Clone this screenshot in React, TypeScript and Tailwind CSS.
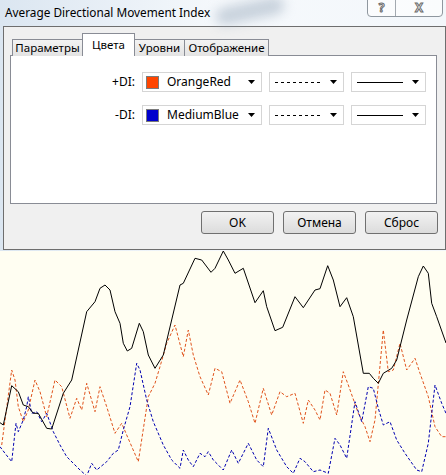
import React from "react";

// точки графика (x, y в координатах страницы)
const blackLine = [
  0, 422.7, 3.3, 425, 11.7, 385.7, 18.3, 391.7, 23.3, 405, 28.3, 406.7, 33.3, 413.3, 38.3, 413.3, 46.7, 428.3, 51.7, 429,
  63.3, 393.3, 71.7, 380, 86.7, 311.7, 95, 301.7, 100, 288.3, 105, 285, 110, 290, 115, 311.7, 120, 323.3, 123.3, 343.3,
  127.3, 351, 131.7, 348.3, 139.3, 323.3, 143.3, 331.7, 148.3, 355, 155, 368.3, 163.3, 355, 180, 285, 183.3, 283.3,
  195, 258.3, 201.7, 260, 211, 272.3, 215, 268.3, 223.3, 251, 228.3, 260, 235, 273.3, 243.3, 268.3, 255, 302.7,
  263.3, 290.7, 266.7, 306.7, 275, 330.7, 282.7, 327.3, 295, 296.7, 303.3, 307.7, 315, 290, 320, 288.7, 327.7, 265.7,
  333.3, 280, 340, 306.7, 346.7, 297.7, 353.3, 316.7, 363.3, 373.3, 369.3, 373.3, 373.3, 378.3, 378.3, 383.3,
  383.3, 373.3, 391.7, 368.3, 396.7, 360, 406.7, 320, 418.3, 276.7, 423.3, 266, 428.3, 273.3, 431.7, 303.3,
  436.7, 316.7, 446, 343,
];

const orangeLine = [
  1.7, 445, 11.7, 370, 15, 380, 18.3, 406.7, 23.3, 421.7, 28.3, 410, 35, 380, 40, 391.7, 46.7, 416.7, 55, 380,
  61.7, 386.7, 70, 418.3, 76.7, 398.3, 81.7, 410, 86.7, 383.3, 95, 411.7, 100, 386.7, 106.7, 406.7, 115, 433.3,
  121.7, 423.3, 126.7, 435, 138.3, 461.7, 148.3, 396.7, 155, 383.3, 160, 366.7, 166.7, 343.3, 175, 325, 183.3, 356.7,
  188.3, 330, 193.3, 355, 200, 376.7, 208.3, 395, 215, 368.3, 221.7, 371.7, 230, 403.3, 240, 380, 248.3, 401.7,
  255, 423.3, 263.3, 388.3, 271.7, 415, 280, 391.7, 286.7, 396.7, 295, 393.3, 303.3, 423.3, 308.3, 400, 315, 410,
  320, 420, 325, 390, 330, 393.3, 336.7, 415, 343.3, 371.7, 348.3, 385, 358.3, 413.3, 365, 426.7, 370, 441.7,
  375, 420, 383.3, 330, 388.3, 371.7, 393.3, 370, 400, 343.3, 406.7, 370, 415, 358.3, 420, 373.3, 428.3, 396.7,
  435, 426.7, 441.7, 436.7, 446, 436.7,
];

const blueLine = [
  0, 446.7, 5, 453.3, 11.7, 461.7, 16, 423.3, 18.3, 431.7, 23.3, 420, 26.7, 406.7, 28.3, 396.7, 31.7, 413.3,
  36.7, 411.7, 41.7, 421.7, 46.7, 413.3, 53.3, 431.7, 60, 445, 66.7, 456.7, 80, 470, 86.7, 476, 91.7, 463.3,
  96.7, 470, 106.7, 461.7, 113.3, 453.3, 118.3, 450, 123.3, 430, 130, 406.7, 136.7, 363.3, 140, 370, 146.7, 400,
  153.3, 421.7, 163.3, 445, 171.7, 460, 180, 468.3, 183.3, 450, 188.3, 460, 193.3, 466.7, 200, 453.3, 205, 456.7,
  208.3, 451.7, 213.3, 460, 223.3, 470, 231.7, 450, 238.3, 463.3, 248.3, 443.3, 256.7, 460, 263.3, 466.7,
  268.3, 428.3, 276.7, 450, 286.7, 466.7, 293.3, 473.3, 300, 458.3, 305, 461.7, 313.3, 471.7, 320, 470,
  328.3, 473.3, 335, 438.3, 340, 445, 346.7, 458.3, 355, 401.7, 361.7, 421.7, 368.3, 386.7, 373.3, 388.3,
  378.3, 408.3, 383.3, 425, 390, 421.7, 396.7, 440, 405, 453.3, 416.7, 470, 421.7, 471.7, 428.3, 443.3,
  435, 385, 441.7, 403.3, 446, 413.3,
];

const toPoints = (arr: number[]) => {
  const out: string[] = [];
  for (let i = 0; i < arr.length; i += 2) out.push(`${arr[i]},${arr[i + 1]}`);
  return out.join(" ");
};

function Arrow() {
  return (
    <svg width="7" height="4" viewBox="0 0 7 4" className="shrink-0">
      <path d="M0 0H7L3.5 4Z" fill="#000" />
    </svg>
  );
}

function ColorCombo({ color, name }: { color: string; name: string }) {
  return (
    <div className="w-[120px] h-[20px] border border-[#d5d5d5] bg-white flex items-center pl-[3px] pr-[6px]">
      <div className="w-[13px] h-[13px] border border-[#7a7a7a]" style={{ backgroundColor: color }} />
      <span className="ml-[8px] flex-1 leading-none">{name}</span>
      <Arrow />
    </div>
  );
}

function StyleCombo({ dashed }: { dashed: boolean }) {
  return (
    <div className="w-[75px] h-[20px] border border-[#d5d5d5] bg-white flex items-center pl-[5px] pr-[6px]">
      <svg width="46" height="1" className="shrink-0">
        <line x1="0" y1="0.5" x2="46" y2="0.5" stroke="#000" strokeWidth="1" strokeDasharray={dashed ? "3 3" : undefined} />
      </svg>
      <div className="flex-1" />
      <Arrow />
    </div>
  );
}

function Row({ label, color, name }: { label: string; color: string; name: string }) {
  return (
    <div className="flex items-center h-[20px]">
      <div className="w-[124px] text-right">{label}</div>
      <div className="ml-[7px] flex gap-[7px]">
        <ColorCombo color={color} name={name} />
        <StyleCombo dashed />
        <StyleCombo dashed={false} />
      </div>
    </div>
  );
}

function Button({ children }: { children: React.ReactNode }) {
  return (
    <button className="w-[73px] h-[23px] rounded-[3px] border border-[#707070] bg-gradient-to-b from-[#f2f2f2] to-[#dcdcdc] leading-none text-black">
      {children}
    </button>
  );
}

export default function App() {
  return (
    <div className="w-[446px] h-[475px] overflow-hidden flex flex-col bg-[#fffef2] font-['Noto_Sans',sans-serif] text-[12px] text-black">
      {/* окно диалога */}
      <div className="relative h-[251px] shrink-0 bg-gradient-to-r from-[#dbe6f1] via-[#f6f9fc] to-[#f3f7fb]">
        <div className="absolute left-[215px] top-[2px] w-[70px] h-[18px] rounded-full bg-[#9aabbd] opacity-50 blur-[6px] rotate-[-12deg]" />
        <div className="relative h-[26px] flex items-center pl-[5px] text-[11.8px] text-black">
          Average Directional Movement Index
        </div>
        <div className="absolute top-[-1px] right-[3px] flex h-[18px] border border-[#8f979f] rounded-b-[4px] bg-white/60 overflow-hidden">
          <div className="w-[28px] flex items-center justify-center border-r border-[#a3a9b0] text-[12px] leading-none font-bold text-transparent [-webkit-text-stroke:1px_#6c6c6c]">
            ?
          </div>
          <div className="w-[46px] flex items-center justify-center text-[12px] leading-none font-bold text-transparent [-webkit-text-stroke:1px_#6c6c6c]">
            X
          </div>
        </div>

        <div className="ml-[3px] w-[443px] h-[224px] border border-[#6e6e6e] bg-[#f0f0f0] flex flex-col">
          {/* вкладки */}
          <div className="mt-[6px] ml-[8px] h-[23px] flex items-end relative z-10 text-[11.5px]">
            <div className="w-[71px] h-[17px] border border-b-0 border-[#898c95] bg-gradient-to-b from-[#f3f3f3] to-[#e3e3e3] flex items-center justify-center">
              Параметры
            </div>
            <div className="w-[53px] -ml-px h-[23px] border border-b-0 border-[#898c95] bg-white flex justify-center pt-[2px]">
              Цвета
            </div>
            <div className="w-[51px] -ml-px h-[17px] border border-b-0 border-[#898c95] bg-gradient-to-b from-[#f3f3f3] to-[#e3e3e3] flex items-center justify-center">
              Уровни
            </div>
            <div className="w-[85px] -ml-px h-[17px] border border-b-0 border-[#898c95] bg-gradient-to-b from-[#f3f3f3] to-[#e3e3e3] flex items-center justify-center">
              Отображение
            </div>
          </div>
          <div className="ml-[6px] -mt-px w-[427px] h-[149px] border border-[#898c95] bg-white flex flex-col gap-[13px] pt-[16px]">
            <Row label="+DI:" color="#ff4500" name="OrangeRed" />
            <Row label="-DI:" color="#0000cd" name="MediumBlue" />
          </div>
          <div className="mt-[7px] pr-[7px] flex justify-end gap-[9px]">
            <Button>OK</Button>
            <Button>Отмена</Button>
            <Button>Сброс</Button>
          </div>
        </div>
      </div>

      {/* график */}
      <svg className="flex-1 w-full" viewBox="0 251 446 224" preserveAspectRatio="none">
        <polyline points={toPoints(orangeLine)} fill="none" stroke="#e0531c" strokeWidth="1" strokeDasharray="3 2" />
        <polyline points={toPoints(blueLine)} fill="none" stroke="#0000b0" strokeWidth="1" strokeDasharray="3 2" />
        <polyline points={toPoints(blackLine)} fill="none" stroke="#000" strokeWidth="1" />
      </svg>
    </div>
  );
}
